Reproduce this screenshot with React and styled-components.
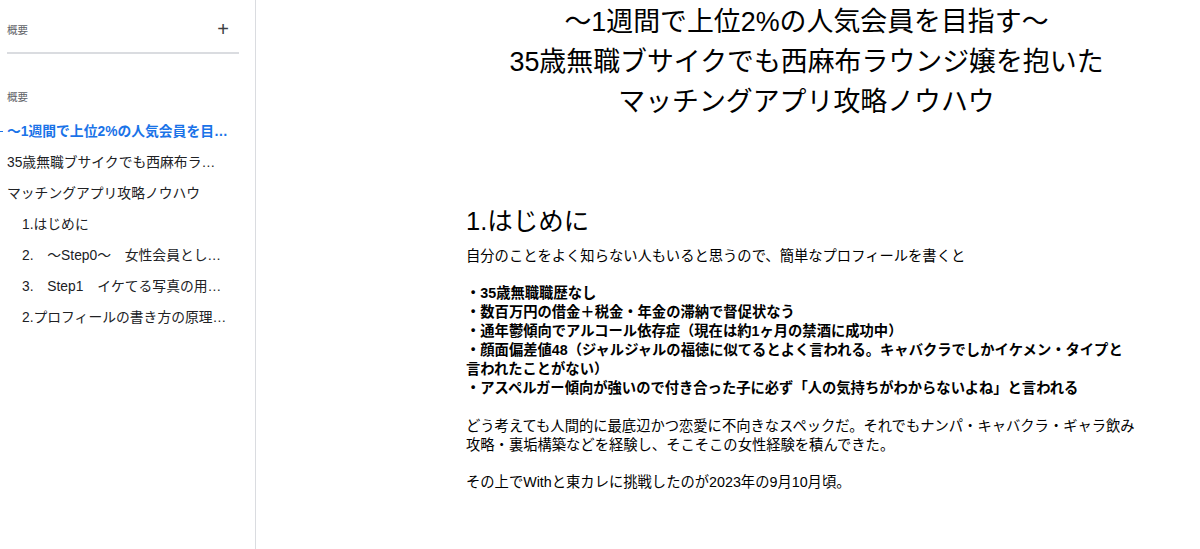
import React from 'react';
import styled, { createGlobalStyle } from 'styled-components';

const GlobalStyle = createGlobalStyle`
  html, body {
    margin: 0;
    padding: 0;
    background: #fff;
  }
  body {
    font-family: "Liberation Sans", Arial, "Noto Sans CJK JP", sans-serif;
    color: #000;
  }
`;

const Page = styled.div`
  display: flex;
  width: 1200px;
  height: 549px;
  overflow: hidden;
`;

const Sidebar = styled.aside`
  width: 256px;
  flex-shrink: 0;
  border-right: 1px solid #dadce0;
  padding: 19px 0 0 0;
  box-sizing: border-box;
`;

const SidebarHeader = styled.div`
  display: flex;
  align-items: center;
  justify-content: space-between;
  margin: 0 16px 0 7px;
  height: 20px;
  padding-bottom: 13px;
  border-bottom: 2px solid #dadce0;
`;

const Label = styled.span`
  font-size: 10.5px;
  color: #5f6368;
`;

const PlusButton = styled.span`
  font-size: 20px;
  line-height: 20px;
  color: #3c4043;
  font-weight: 300;
  margin-right: 10px;
`;

const SectionLabel = styled.div`
  font-size: 10.5px;
  color: #5f6368;
  margin: 35px 0 0 7px;
  height: 16px;
`;

const OutlineList = styled.ul`
  list-style: none;
  margin: 10.5px 0 0 0;
  padding: 0;
`;

const OutlineItem = styled.li`
  position: relative;
  height: 31px;
  line-height: 31px;
  padding-left: ${(p) => (p.$indent ? 22 : 7)}px;
  padding-right: 27px;
  font-size: 13.8px;
  color: ${(p) => (p.$active ? '#1a73e8' : '#202124')};
  font-weight: ${(p) => (p.$active ? 'bold' : 'normal')};
  white-space: nowrap;
  overflow: hidden;
  text-overflow: ellipsis;

  ${(p) =>
    p.$active &&
    `
    &::before {
      content: '';
      position: absolute;
      left: 0;
      top: 15px;
      width: 3px;
      height: 1px;
      background: #1a73e8;
    }
  `}
`;

const Main = styled.main`
  flex: 1;
  display: flex;
  padding-left: 210px;
`;

const Column = styled.div`
  width: 675px;
`;

const Title = styled.h1`
  margin: 2px 0 0 0;
  padding-left: 6px;
  text-align: center;
  font-size: 26.9px;
  line-height: 40px;
  font-weight: normal;
  color: #000;
`;

const Heading = styled.h2`
  margin: 81px 0 7.5px 0;
  font-size: 25.5px;
  line-height: 36px;
  font-weight: normal;
`;

const Para = styled.p`
  margin: 0;
  font-size: 14.3px;
  line-height: 18.9px;
  white-space: pre-line;
  font-weight: ${(p) => (p.$bold ? 'bold' : 'normal')};
`;

const Blank = styled.div`
  height: 18.9px;
`;

const outline = [
  { text: '～1週間で上位2%の人気会員を目指す～', active: true },
  { text: '35歳無職ブサイクでも西麻布ラウンジ嬢を抱いた' },
  { text: 'マッチングアプリ攻略ノウハウ' },
  { text: '1.はじめに', indent: true },
  { text: '2.　～Step0～　女性会員としての目線を知る', indent: true },
  { text: '3.　Step1　イケてる写真の用意をしよう', indent: true },
  { text: '2.プロフィールの書き方の原理原則', indent: true },
];

const bullets = [
  '・35歳無職職歴なし',
  '・数百万円の借金＋税金・年金の滞納で督促状なう',
  '・通年鬱傾向でアルコール依存症（現在は約1ヶ月の禁酒に成功中）',
  '・顔面偏差値48（ジャルジャルの福徳に似てるとよく言われる。キャバクラでしかイケメン・タイプと\n言われたことがない）',
  '・アスペルガー傾向が強いので付き合った子に必ず「人の気持ちがわからないよね」と言われる',
];

export default function App() {
  return (
    <>
      <GlobalStyle />
      <Page>
        <Sidebar>
          <SidebarHeader>
            <Label>概要</Label>
            <PlusButton>+</PlusButton>
          </SidebarHeader>
          <SectionLabel>概要</SectionLabel>
          <OutlineList>
            {outline.map((item, i) => (
              <OutlineItem key={i} $active={item.active} $indent={item.indent}>
                {item.text}
              </OutlineItem>
            ))}
          </OutlineList>
        </Sidebar>
        <Main>
          <Column>
            <Title>
              ～1週間で上位2%の人気会員を目指す～
              <br />
              35歳無職ブサイクでも西麻布ラウンジ嬢を抱いた
              <br />
              マッチングアプリ攻略ノウハウ
            </Title>
            <Heading>1.はじめに</Heading>
            <Para>自分のことをよく知らない人もいると思うので、簡単なプロフィールを書くと</Para>
            <Blank />
            {bullets.map((b, i) => (
              <Para key={i} $bold>
                {b}
              </Para>
            ))}
            <Blank />
            <Para>
              どう考えても人間的に最底辺かつ恋愛に不向きなスペックだ。それでもナンパ・キャバクラ・ギャラ飲み攻略・裏垢構築などを経験し、そこそこの女性経験を積んできた。
            </Para>
            <Blank />
            <Para>その上でWithと東カレに挑戦したのが2023年の9月10月頃。</Para>
          </Column>
        </Main>
      </Page>
    </>
  );
}
